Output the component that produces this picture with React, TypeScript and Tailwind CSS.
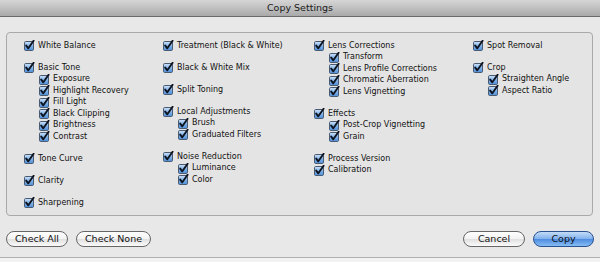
import React from "react";

type Item = { label: string; subs?: string[]; flatSubs?: boolean };

const columns: { width: string; groups: Item[] }[] = [
  {
    width: "w-[139px]",
    groups: [
      { label: "White Balance" },
      { label: "Basic Tone", subs: ["Exposure", "Highlight Recovery", "Fill Light", "Black Clipping", "Brightness", "Contrast"] },
      { label: "Tone Curve" },
      { label: "Clarity" },
      { label: "Sharpening" },
    ],
  },
  {
    width: "w-[151px]",
    groups: [
      { label: "Treatment (Black & White)" },
      { label: "Black & White Mix" },
      { label: "Split Toning" },
      { label: "Local Adjustments", subs: ["Brush", "Graduated Filters"] },
      { label: "Noise Reduction", subs: ["Luminance", "Color"] },
    ],
  },
  {
    width: "w-[159px]",
    groups: [
      { label: "Lens Corrections", subs: ["Transform", "Lens Profile Corrections", "Chromatic Aberration", "Lens Vignetting"] },
      { label: "Effects", subs: ["Post-Crop Vignetting", "Grain"] },
      { label: "Process Version", subs: ["Calibration"], flatSubs: true },
    ],
  },
  {
    width: "w-[110px]",
    groups: [
      { label: "Spot Removal" },
      { label: "Crop", subs: ["Straighten Angle", "Aspect Ratio"] },
    ],
  },
];

function Check() {
  return (
    <svg width="11" height="11" viewBox="0 0 11 11" className="shrink-0">
      <defs>
        <linearGradient id="cbg" x1="0" y1="0" x2="0" y2="1">
          <stop offset="0" stopColor="#cfe3f8" />
          <stop offset="0.5" stopColor="#7fb1e8" />
          <stop offset="1" stopColor="#4f8ed8" />
        </linearGradient>
      </defs>
      <rect x="0.5" y="1.5" width="9" height="9" rx="1.2" fill="url(#cbg)" stroke="#4a5a70" strokeWidth="1" />
      <path d="M2.2 5.6 L4.3 8.3 L9.6 0.8" fill="none" stroke="#0d1420" strokeWidth="1.9" strokeLinecap="round" strokeLinejoin="round" />
    </svg>
  );
}

function Row({ label, indent }: { label: string; indent?: boolean }) {
  return (
    <div className={`flex items-center gap-[3px] h-[11.5px] ${indent ? "pl-[15px]" : ""}`}>
      <Check />
      <span className="whitespace-nowrap leading-none">{label}</span>
    </div>
  );
}

function Button({ label, w, primary }: { label: string; w: string; primary?: boolean }) {
  return (
    <div
      className={`${w} h-[16px] rounded-full flex items-center justify-center text-[9.5px] leading-none text-[#111] border ${
        primary
          ? "border-[#2a5290] bg-[linear-gradient(#c4dcf8,#7fb0ec_50%,#4d8ce0_52%,#86bdf4)]"
          : "border-[#666] bg-[linear-gradient(#ffffff,#f2f2f2_50%,#e0e0e0_52%,#fbfbfb)]"
      }`}
    >
      {label}
    </div>
  );
}

export default function App() {
  return (
    <div
      className="w-[600px] h-[262px] bg-[#e8e8e8] flex flex-col overflow-hidden"
      style={{ fontFamily: '"DejaVu Sans", Verdana, sans-serif' }}
    >
      <div className="h-[17px] shrink-0 border-b border-[#6a6a6a] bg-[linear-gradient(#d6d6d6,#a9a9a9)] flex items-center justify-center">
        <span className="text-[9.5px] text-[#1a1a1a] leading-none">Copy Settings</span>
      </div>
      <div className="mt-[15px] mx-[6px] h-[184px] w-[587px] rounded-[4px] border border-[#a9a9a9] bg-[#e4e4e4] pt-[7px] pl-[17px] flex text-[8px] text-[#111]">
        {columns.map((col, i) => (
          <div key={i} className={`${col.width} flex flex-col gap-[10.5px]`}>
            {col.groups.map((g) => (
              <div key={g.label} className="flex flex-col">
                <Row label={g.label} />
                {g.subs?.map((s) => <Row key={s} label={s} indent={!g.flatSubs} />)}
              </div>
            ))}
          </div>
        ))}
      </div>
      <div className="flex items-center mt-[15px] mx-[6px] gap-[8px]">
        <Button label="Check All" w="w-[62px]" />
        <Button label="Check None" w="w-[75px]" />
        <div className="flex-1" />
        <Button label="Cancel" w="w-[62px]" />
        <Button label="Copy" w="w-[61px]" primary />
      </div>
      <div className="flex-1" />
      <div className="h-[5px] border-t border-[#b0b0b0] bg-[#f2f2f2]" />
    </div>
  );
}
